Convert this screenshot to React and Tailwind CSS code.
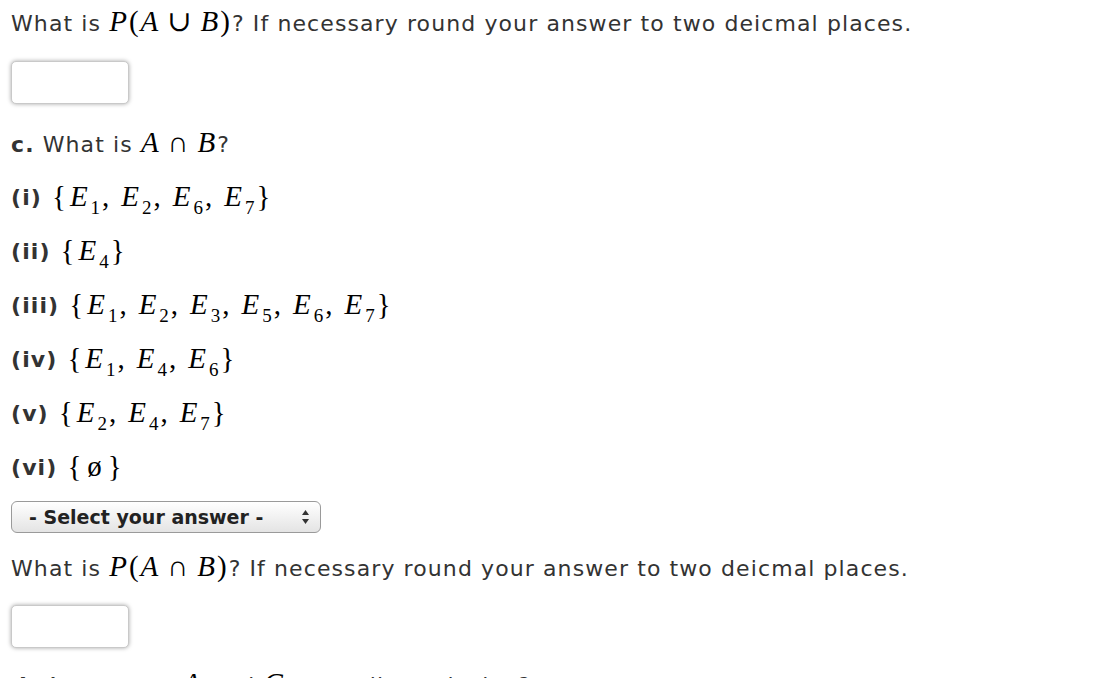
const sans = { fontFamily: '"DejaVu Sans", Verdana, sans-serif' };

// Math run: italic serif letters, upright serif operators
const M = ({ children }) => (
  <span
    className="text-[29px] text-black italic tracking-[2px]"
    style={{ fontFamily: '"Liberation Serif", "DejaVu Serif", serif' }}
  >
    {children}
  </span>
);

const Op = ({ children, className = '' }) => (
  <span className={`not-italic ${className}`}>{children}</span>
);

const Ev = ({ n }) => (
  <span>
    <span className="tracking-normal">E</span>
    <sub className="not-italic tracking-normal text-[19px] align-[-3px] ml-[3px]">{n}</sub>
  </span>
);

const EventSet = ({ items }) => (
  <M>
    <Op className="mr-[2px]">{'{'}</Op>
    {items.map((n, i) => (
      <span key={n}>
        <Ev n={n} />
        {i < items.length - 1 && <Op className="ml-[2px] mr-[10px]">,</Op>}
      </span>
    ))}
    <Op className="ml-[2px]">{'}'}</Op>
  </M>
);

const AnswerBox = () => (
  <div className="w-[118px] h-[43px] rounded-[5px] border border-[#c9c9c9] bg-white shadow-[0_0_4px_rgba(0,0,0,0.35)]" />
);

const Choice = ({ label, items, empty }) => (
  <div className="h-[54px] flex items-center gap-[10px]">
    <span className="font-bold">{label}</span>
    {empty ? (
      <M>
        <Op>{'{'}</Op>
        <Op className="mx-[4px]">ø</Op>
        <Op>{'}'}</Op>
      </M>
    ) : (
      <EventSet items={items} />
    )}
  </div>
);

export default function App() {
  return (
    <div className="bg-white min-h-screen pl-[11px] text-[22px] tracking-[1.1px] text-[#333]" style={sans}>
      <div className="h-[44px] flex items-center">
        <span>
          What is <M>P<Op>(</Op>A<Op className="mx-[7px]">∪</Op>B<Op>)</Op></M>? If necessary round your answer to two deicmal places.
        </span>
      </div>
      <div className="mt-[17px]">
        <AnswerBox />
      </div>

      <div className="mt-[12px] h-[54px] flex items-center">
        <span>
          <span className="font-bold">c.</span> What is <M>A<Op className="mx-[7px]">∩</Op>B</M>?
        </span>
      </div>
      <Choice label="(i)" items={[1, 2, 6, 7]} />
      <Choice label="(ii)" items={[4]} />
      <Choice label="(iii)" items={[1, 2, 3, 5, 6, 7]} />
      <Choice label="(iv)" items={[1, 4, 6]} />
      <Choice label="(v)" items={[2, 4, 7]} />
      <Choice label="(vi)" empty />

      <div className="mt-[7px]">
        <div className="w-[310px] h-[32px] rounded-[6px] border border-[#9a9a9a] bg-gradient-to-b from-white to-[#e4e4e4] flex items-center justify-between pl-[17px] pr-[10px] text-[19px] tracking-normal font-bold text-[#222]">
          <span>- Select your answer -</span>
          <svg width="9" height="16" viewBox="0 0 9 16">
            <path d="M4.5 1 L8 6 H1 Z" fill="#333" />
            <path d="M4.5 15 L8 10 H1 Z" fill="#333" />
          </svg>
        </div>
      </div>

      <div className="mt-[12px] h-[44px] flex items-center">
        <span>
          What is <M>P<Op>(</Op>A<Op className="mx-[7px]">∩</Op>B<Op>)</Op></M>? If necessary round your answer to two deicmal places.
        </span>
      </div>
      <div className="mt-[16px]">
        <AnswerBox />
      </div>

      <div className="mt-[14px] h-[44px] flex items-center">
        <span>
          <span className="font-bold">d.</span> Are events <M>A</M> and <M>C</M> mutually exclusive?
        </span>
      </div>
    </div>
  );
}
